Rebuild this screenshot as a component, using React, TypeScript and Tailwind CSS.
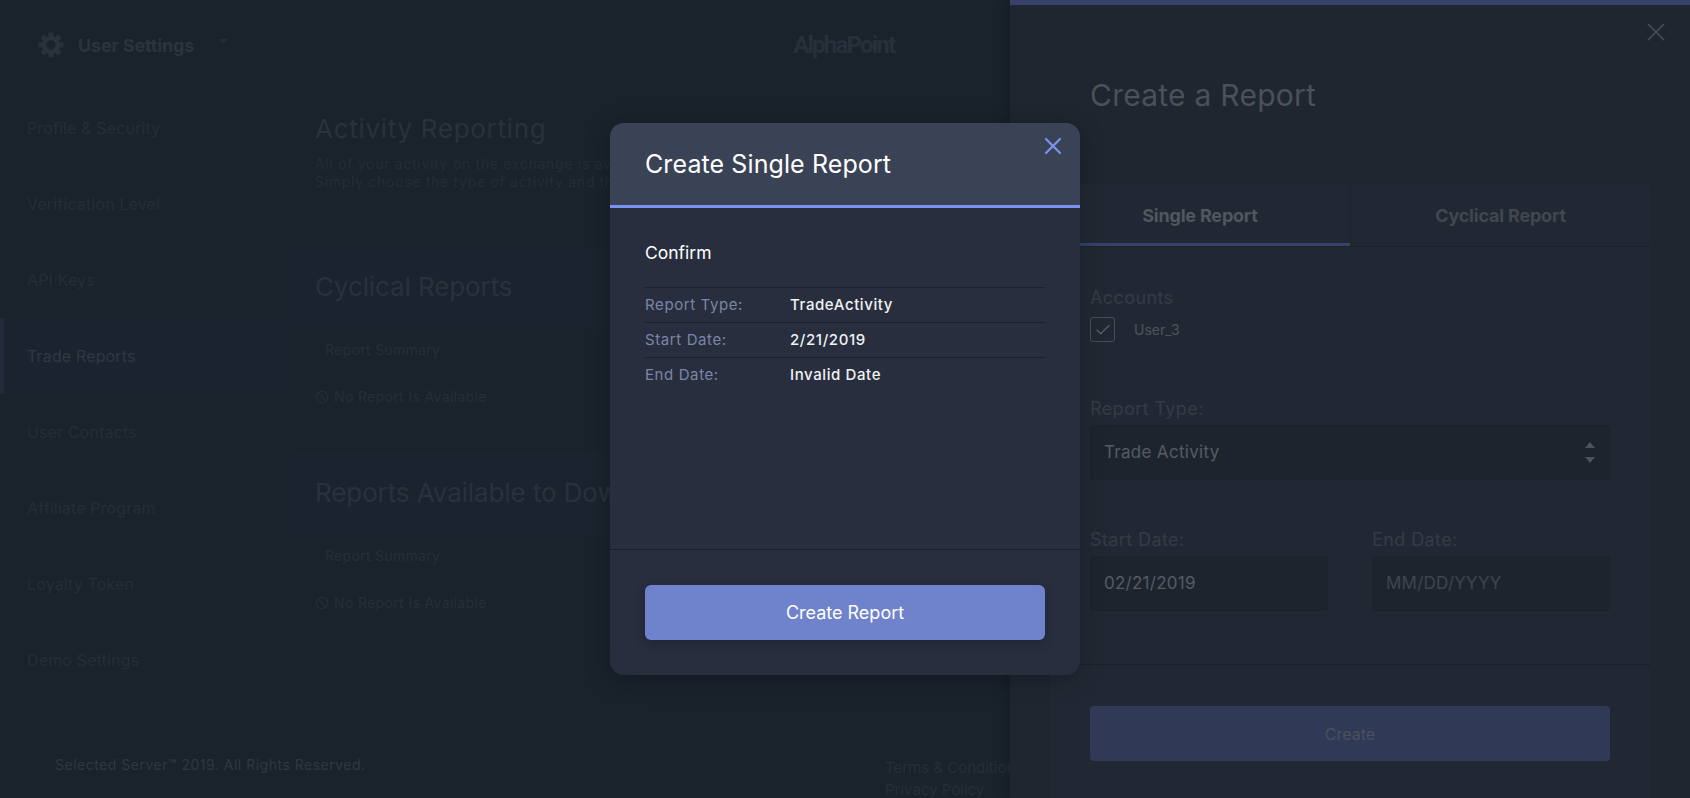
import { Ban, Check, X } from 'lucide-react';

const navItems = [
  'Profile & Security',
  'Verification Level',
  'API Keys',
  'Trade Reports',
  'User Contacts',
  'Affiliate Program',
  'Loyalty Token',
  'Demo Settings',
];

const confirmRows = [
  ['Report Type:', 'TradeActivity'],
  ['Start Date:', '2/21/2019'],
  ['End Date:', 'Invalid Date'],
];

const gearTeeth = [0, 45, 90, 135, 180, 225, 270, 315];

const GearIcon = () => (
  <svg width="26" height="26" viewBox="0 0 26 26" fill="currentColor">
    {gearTeeth.map((deg) => (
      <rect key={deg} x="10.5" y="0.5" width="5" height="5" rx="1" transform={`rotate(${deg} 13 13)`} />
    ))}
    <circle cx="13" cy="13" r="7" fill="none" stroke="currentColor" strokeWidth="4.5" />
  </svg>
);

const ReportSection = ({ title }: { title: string }) => (
  <section>
    <div className="h-[85px] bg-[#1b232e] pl-[25px] pt-[24px] text-[26px] leading-[34px] tracking-[-0.1px] text-[#2a313d]">
      {title}
    </div>
    <div className="pl-[35px] pt-[10px] text-[14px] leading-[18px] tracking-[0.3px] text-[#272e39]">Report Summary</div>
    <div className="mt-[29px] flex items-center gap-[5px] pl-[25px] text-[14px] leading-[18px] tracking-[0.35px] text-[#272e39]">
      <Ban size={14} strokeWidth={2} />
      No Report Is Available
    </div>
  </section>
);

const Field = ({ label, value, muted }: { label: string; value: string; muted?: boolean }) => (
  <div className="w-[238px]">
    <div className="text-[18px] leading-[22px] tracking-[0.4px] text-[#353b47]">{label}</div>
    <div className={`mt-[5px] flex h-[55px] items-center rounded-[4px] border border-[#1c222b] bg-[#1e242e] pl-[13px] text-[17px] tracking-[0.25px] ${muted ? 'text-[#3f444e]' : 'text-[#565b63]'}`}>
      {value}
    </div>
  </div>
);

export default function App() {
  return (
    <div className="relative flex h-[798px] w-[1690px] overflow-hidden bg-[#1a222c] font-['Inter',sans-serif]">
      {/* Left side, dimmed page */}
      <div className="flex w-[1010px] shrink-0 flex-col">
        <header className="flex h-[90px] shrink-0 items-center">
          <div className="ml-[38px] text-[#2a313d]">
            <GearIcon />
          </div>
          <div className="ml-[14px] text-[18px] font-bold tracking-[-0.15px] text-[#2c333f]">User Settings</div>
          <div className="mb-[8px] ml-[24px] h-0 w-0 border-x-[5px] border-t-[5px] border-x-transparent border-t-[#252c38]" />
          <div className="ml-[565px] font-['Roboto',sans-serif] text-[24px] font-bold tracking-[-1.8px] text-[#282f3b]">AlphaPoint</div>
        </header>

        <main className="flex h-[612px] shrink-0">
          <nav className="w-[288px] shrink-0">
            {navItems.map((item) =>
              item === 'Trade Reports' ? (
                <div key={item} className="flex h-[76px] items-center border-l-[4px] border-[#242b3d] bg-[#1b232e] pl-[23px] text-[16px] tracking-[0.15px] text-[#313844]">
                  {item}
                </div>
              ) : (
                <div key={item} className="flex h-[76px] items-center pl-[27px] text-[16px] tracking-[0.15px] text-[#262d38]">
                  {item}
                </div>
              ),
            )}
          </nav>
          <div className="ml-[2px] flex-1">
            <div className="h-[156px] pl-[25px] pt-[22px]">
              <h1 className="text-[26px] leading-[34px] tracking-[0.7px] text-[#2a313d]">Activity Reporting</h1>
              <p className="mt-[9px] whitespace-nowrap text-[14px] leading-[18px] tracking-[0.7px] text-[#252c37]">
                All of your activity on the exchange is available to you here.
                <br />
                Simply choose the type of activity and the date range.
              </p>
            </div>
            <ReportSection title="Cyclical Reports" />
            <div className="mt-[46px]">
              <ReportSection title="Reports Available to Download" />
            </div>
          </div>
        </main>

        <footer className="flex flex-1 justify-between pl-[55px]">
          <div className="pt-[52px] text-[14px] tracking-[0.5px] text-[#303743]">Selected Server™ 2019. All Rights Reserved.</div>
          <div className="w-[125px] overflow-hidden whitespace-nowrap pt-[55px] text-[15px] leading-[22px] text-[#272e39]">
            <div>Terms &amp; Conditions</div>
            <div>Privacy Policy</div>
          </div>
        </footer>
      </div>

      {/* Right side panel, dimmed */}
      <aside className="relative flex-1 border-t-[5px] border-[#36426a] bg-[#1f2630] shadow-[-6px_0_10px_rgba(0,0,0,0.12)]">
        <button className="absolute right-[19px] top-[12px] text-[#3f4551]" aria-label="Close panel">
          <X size={30} strokeWidth={1.6} />
        </button>
        <h2 className="pl-[80px] pt-[70px] text-[30px] leading-[40px] tracking-[0.25px] text-[#4b5059]">Create a Report</h2>

        <div className="ml-[40px] mt-[69px] h-[614px] w-[600px] rounded-t-[4px] bg-[#222833]">
          <div className="flex h-[63px] border-b border-[#1c222c]">
            <div className="flex w-[300px] items-center justify-center border-y-[3px] border-t-transparent border-b-[#36426a] text-[18px] font-bold tracking-[-0.2px] text-[#51565f]">
              Single Report
            </div>
            <div className="flex flex-1 items-center justify-center border-l border-[#1e242e] text-[18px] font-bold tracking-[-0.2px] text-[#41464f]">
              Cyclical Report
            </div>
          </div>

          <div className="px-[40px]">
            <div className="pt-[39px] text-[18px] leading-[24px] tracking-[0.4px] text-[#353b47]">Accounts</div>
            <div className="mt-[7px] flex items-center">
              <div className="flex h-[25px] w-[25px] items-center justify-center rounded-[3px] border border-[#474c56] text-[#565b63]">
                <Check size={18} strokeWidth={1.8} />
              </div>
              <span className="ml-[19px] text-[14px] text-[#4e535c]">User_3</span>
            </div>

            <div className="pt-[56px] text-[18px] leading-[22px] tracking-[0.4px] text-[#353b47]">Report Type:</div>
            <div className="mt-[5px] flex h-[55px] items-center justify-between rounded-[4px] border border-[#1c222b] bg-[#1e242e] pl-[13px] pr-[14px] text-[17px] tracking-[0.3px] text-[#565b63]">
              Trade Activity
              <div className="flex flex-col gap-[9px]">
                <div className="h-0 w-0 border-x-[5px] border-b-[6px] border-x-transparent border-b-[#4d525b]" />
                <div className="h-0 w-0 border-x-[5px] border-t-[6px] border-x-transparent border-t-[#4d525b]" />
              </div>
            </div>

            <div className="mt-[49px] flex justify-between">
              <Field label="Start Date:" value="02/21/2019" />
              <Field label="End Date:" value="MM/DD/YYYY" muted />
            </div>
          </div>

          <div className="mt-[53px] border-t border-[#1a202a] px-[40px] pt-[41px]">
            <button className="flex h-[55px] w-full items-center justify-center rounded-[4px] bg-[#303955] text-[16px] text-[#4b505c]">
              Create
            </button>
          </div>
        </div>
      </aside>

      {/* Confirm modal */}
      <div className="absolute inset-0 flex items-center justify-center">
        <div className="flex h-[552px] w-[470px] flex-col overflow-hidden rounded-[14px] bg-[#282e3e] shadow-[0_4px_24px_rgba(0,0,0,0.25)]">
          <div className="relative h-[85px] shrink-0 border-b-[3px] border-[#7b93ef] bg-[#3a4356] pl-[35px] pt-[25px] text-[25px] leading-[32px] tracking-[0.1px] text-white">
            Create Single Report
            <button className="absolute right-[13px] top-[9px] text-[#7b93ef]" aria-label="Close">
              <X size={28} strokeWidth={1.9} />
            </button>
          </div>

          <div className="h-[341px] shrink-0 px-[35px]">
            <div className="pt-[33px] text-[17.5px] leading-[24px] text-white">Confirm</div>
            <div className="mt-[22px]">
              {confirmRows.map(([label, value]) => (
                <div key={label} className="flex h-[35px] items-center border-t border-[#1b202b] pt-[1px] text-[15px] tracking-[0.6px]">
                  <div className="w-[145px] text-[#7b86a5]">{label}</div>
                  <div className="font-medium text-[#f1f2f5]">{value}</div>
                </div>
              ))}
            </div>
          </div>

          <div className="flex-1 border-t border-[#1b202b] px-[35px] pt-[35px]">
            <button className="flex h-[55px] w-full items-center justify-center rounded-[6px] bg-[#6f83cd] text-[18px] text-white shadow-[0_4px_12px_rgba(0,0,0,0.2)]">
              Create Report
            </button>
          </div>
        </div>
      </div>
    </div>
  );
}
